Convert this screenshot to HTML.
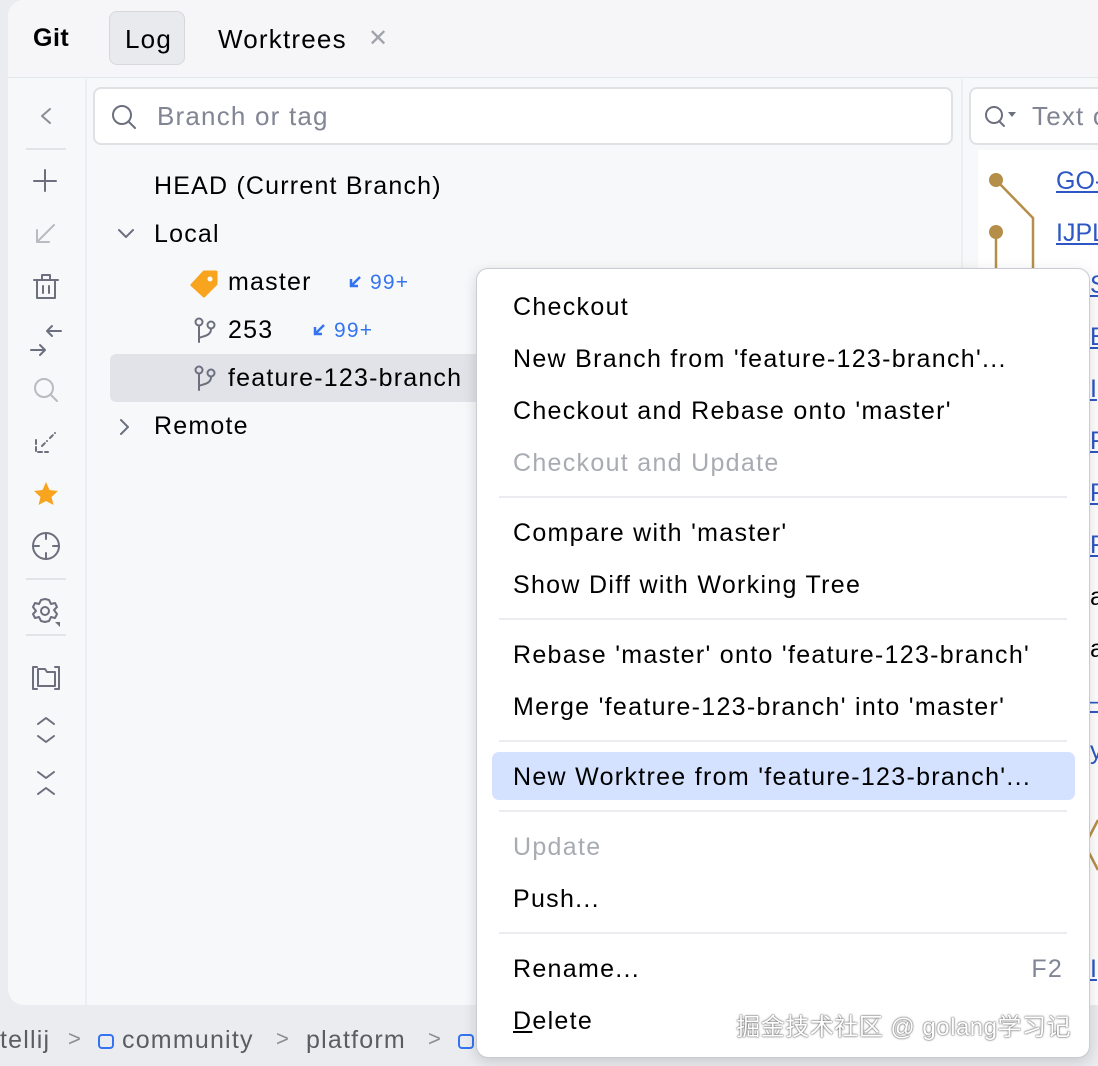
<!DOCTYPE html>
<html><head><meta charset="utf-8"><style>
*{box-sizing:border-box;margin:0;padding:0}
body{width:1098px;height:1066px;overflow:hidden;background:#ebecf0;font-family:"Liberation Sans","Noto Sans CJK SC",sans-serif;position:relative;color:#000}
.abs{position:absolute}
.panel{left:8px;top:0;width:1100px;height:1005px;background:#f7f8fa;border-radius:16px 0 0 16px}
.hdr{left:8px;top:0;width:1100px;height:78px;background:#f6f6f8;border-bottom:1px solid #e6e7ea;border-radius:16px 0 0 0}
.t{position:absolute;white-space:nowrap;letter-spacing:1.2px}
.ic{fill:none;stroke:#6c707e;stroke-width:2;stroke-linecap:round;stroke-linejoin:round}
.mi{position:absolute;left:36px;font-size:25px;white-space:nowrap;letter-spacing:1.3px}
.sep{position:absolute;left:22px;right:22px;height:2px;background:#ebecf0}
.lk{position:absolute;left:1056px;font-size:25px;color:#2c57c5;text-decoration:underline;white-space:nowrap}
.lk2{left:1090px}
.ov{position:absolute;left:0;top:0}
</style></head><body>
<div class="abs panel"></div>
<div class="abs hdr"></div>
<div class="t" style="left:33px;top:24px;font-size:25px;font-weight:bold;letter-spacing:0.5px">Git</div>
<div class="abs" style="left:109px;top:11px;width:76px;height:54px;background:#e9eaee;border:1px solid #d6d8dd;border-radius:8px"></div>
<div class="t" style="left:125px;top:24px;font-size:26px">Log</div>
<div class="t" style="left:218px;top:24px;font-size:26px">Worktrees</div>
<div class="t" style="left:368px;top:24px;font-size:24px;color:#a0a3aa">✕</div>
<div class="abs" style="left:85px;top:79px;width:2px;height:926px;background:#eceef1"></div>
<div class="abs" style="left:26px;top:148px;width:40px;height:2px;background:#e3e4e8"></div>
<div class="abs" style="left:26px;top:578px;width:40px;height:2px;background:#e3e4e8"></div>
<div class="abs" style="left:26px;top:634px;width:40px;height:2px;background:#e3e4e8"></div>
<div class="abs" style="left:93px;top:87px;width:860px;height:58px;background:#fff;border:2px solid #dfe1e5;border-radius:8px"></div>
<div class="t" style="left:157px;top:101px;font-size:26px;color:#818594">Branch or tag</div>
<div class="abs" style="left:969px;top:87px;width:140px;height:58px;background:#fff;border:2px solid #dfe1e5;border-radius:8px"></div>
<div class="t" style="left:1032px;top:101px;font-size:26px;color:#818594">Text or</div>
<div class="t" style="left:154px;top:172px;font-size:25px">HEAD (Current Branch)</div>
<div class="t" style="left:154px;top:220px;font-size:25px">Local</div>
<div class="abs" style="left:110px;top:354px;width:380px;height:48px;background:#e1e3e8;border-radius:6px"></div>
<div class="t" style="left:228px;top:268px;font-size:25px">master</div>
<div class="t" style="left:370px;top:271px;font-size:21px;color:#3574f0">99+</div>
<div class="t" style="left:228px;top:316px;font-size:25px">253</div>
<div class="t" style="left:334px;top:319px;font-size:21px;color:#3574f0">99+</div>
<div class="t" style="left:228px;top:364px;font-size:25px">feature-123-branch</div>
<div class="t" style="left:154px;top:412px;font-size:25px">Remote</div>
<div class="abs" style="left:961px;top:79px;width:2px;height:926px;background:#eceef1"></div>
<div class="abs" style="left:978px;top:150px;width:130px;height:855px;background:#fff"></div>
<div class="lk" style="top:167px">GO-</div>
<div class="lk" style="top:219px">IJPL</div>
<div class="lk lk2" style="top:271px">S</div>
<div class="lk lk2" style="top:323px">E</div>
<div class="lk lk2" style="top:375px">I</div>
<div class="lk lk2" style="top:427px">F</div>
<div class="lk lk2" style="top:479px">F</div>
<div class="lk lk2" style="top:531px">F</div>
<div class="t" style="left:1090px;top:583px;font-size:25px">a</div>
<div class="t" style="left:1090px;top:635px;font-size:25px">a</div>
<div class="lk lk2" style="top:687px">–</div>
<div class="lk lk2" style="top:737px">y</div>
<div class="lk lk2" style="top:955px">I</div>
<svg class="ov" width="1098" height="1066" viewBox="0 0 1098 1066">
<g class="ic">
<path d="M50 109 L42 116 L50 123" stroke="#8a8d95"/>
<path d="M45 170 V191 M34 181 H56"/>
<path d="M54 225 L37 242 M37 230 V242 H49" stroke="#b9bbc1"/>
<path d="M34 280 H58 M42 280 V275 H50 V280 M37 280 V298 H55 V280 M43 286 V293 M49 286 V293"/>
<path d="M31 350 H45 M40 345 L45 350 L40 355 M61 331 H47 M52 326 L47 331 L52 336"/>
<circle cx="44" cy="388" r="9" stroke="#b9bbc1"/><path d="M51 395 L57 401" stroke="#b9bbc1"/>
<path d="M36 440 V452 H48 M42 446 L47 441 M50 438 L55 433" stroke-dasharray="4 3"/>
<circle cx="46" cy="546" r="13"/><path d="M46 533 V539 M46 553 V559 M33 546 H39 M53 546 H59"/>
<circle cx="45" cy="611" r="4"/>
<path d="M45 599 L49 600 L51 604 L55 603 L57 607 L54 610 L57 614 L55 618 L51 617 L49 621 L45 622 L41 621 L39 617 L35 618 L33 614 L36 611 L33 607 L35 603 L39 604 L41 600 Z"/>
<path d="M37 667 H33 V689 H37 M55 667 H59 V689 H55 M38 669 H45 L47 672 H55 V686 H38 Z"/>
<path d="M38 724 L46 718 L54 724 M38 736 L46 742 L54 736"/>
<path d="M38 772 L46 778 L54 772 M38 794 L46 788 L54 794"/>
<circle cx="122" cy="115" r="9"/><path d="M129 122 L135 128"/>
<circle cx="994" cy="115" r="8"/><path d="M999 121 L1004 126"/>
<path d="M119 230 L126 237 L133 230"/>
<path d="M121 420 L128 427 L121 434"/>
<circle cx="199" cy="322" r="3.5"/><circle cx="211" cy="325" r="3.5"/><path d="M199 326 V342 M211 329 C211 336 203 336 199 338"/>
<circle cx="199" cy="370" r="3.5"/><circle cx="211" cy="373" r="3.5"/><path d="M199 374 V390 M211 377 C211 384 203 384 199 386"/>
</g>
<path d="M46 482 L49.5 490 L58 491 L51.5 497 L53.5 505 L46 501 L38.5 505 L40.5 497 L34 491 L42.5 490 Z" fill="#f9a41e"/>
<path d="M60 627 V622 H55 Z" fill="#6c707e"/>
<path d="M1008 112 H1016 L1012 117 Z" fill="#6c707e"/>
<path d="M204 272 H216 V284 L204 296 L192 285 Z" fill="#f9a41e" stroke="#f9a41e" stroke-width="3" stroke-linejoin="round"/>
<circle cx="210" cy="279" r="2.5" fill="#fff"/>
<g fill="none" stroke="#3574f0" stroke-width="2.5"><path d="M360 277 L351 286 M351 279 V286 H358"/><path d="M324 325 L315 334 M315 327 V334 H322"/></g>
<g fill="none" stroke="#b58f4a" stroke-width="2.5"><path d="M996 180 L1033 218 V270 M996 232 V270 M1098 820 L1085 845 L1098 870"/></g>
<circle cx="996" cy="180" r="7" fill="#b58f4a"/><circle cx="996" cy="232" r="7" fill="#b58f4a"/>
</svg>
<div class="t" style="left:0;top:1026px;font-size:25px;color:#5a5d63">tellij</div>
<div class="t" style="left:68px;top:1026px;font-size:22px;color:#8a8d95">&gt;</div>
<div class="abs" style="left:98px;top:1034px;width:16px;height:15px;border:2px solid #3574f0;border-radius:4px"></div>
<div class="t" style="left:122px;top:1026px;font-size:25px;color:#5a5d63">community</div>
<div class="t" style="left:276px;top:1026px;font-size:22px;color:#8a8d95">&gt;</div>
<div class="t" style="left:306px;top:1026px;font-size:25px;color:#5a5d63">platform</div>
<div class="t" style="left:428px;top:1026px;font-size:22px;color:#8a8d95">&gt;</div>
<div class="abs" style="left:458px;top:1034px;width:16px;height:15px;border:2px solid #3574f0;border-radius:4px"></div>
<div class="abs" style="left:476px;top:268px;width:614px;height:790px;background:#fff;border:1px solid #c9ccd3;border-radius:12px;box-shadow:0 4px 14px rgba(0,0,0,.15)">
<div class="mi" style="top:24px">Checkout</div>
<div class="mi" style="top:76px">New Branch from 'feature-123-branch'...</div>
<div class="mi" style="top:128px">Checkout and Rebase onto 'master'</div>
<div class="mi" style="top:180px;color:#a8abb2">Checkout and Update</div>
<div class="sep" style="top:227px"></div>
<div class="mi" style="top:250px">Compare with 'master'</div>
<div class="mi" style="top:302px">Show Diff with Working Tree</div>
<div class="sep" style="top:349px"></div>
<div class="mi" style="top:372px">Rebase 'master' onto 'feature-123-branch'</div>
<div class="mi" style="top:424px">Merge 'feature-123-branch' into 'master'</div>
<div class="sep" style="top:471px"></div>
<div class="abs" style="left:15px;top:483px;width:583px;height:48px;background:#d4e2ff;border-radius:7px"></div>
<div class="mi" style="top:494px">New Worktree from 'feature-123-branch'...</div>
<div class="sep" style="top:541px"></div>
<div class="mi" style="top:564px;color:#a8abb2">Update</div>
<div class="mi" style="top:616px">Push...</div>
<div class="sep" style="top:663px"></div>
<div class="mi" style="top:686px">Rename...</div>
<div class="t" style="right:26px;top:686px;font-size:25px;color:#818594">F2</div>
<div class="mi" style="top:738px"><u>D</u>elete</div>
<div class="t" style="right:18px;top:738px;font-size:24px;letter-spacing:0.5px;color:#fff;text-shadow:0 0 2px #555,0 0 1px #555">掘金技术社区 @ golang学习记</div>
</div>
</body></html>
